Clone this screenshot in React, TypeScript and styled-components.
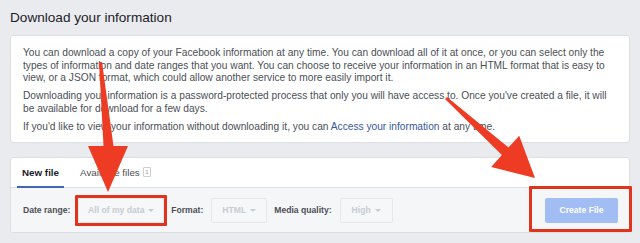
import React from "react";
import styled, { createGlobalStyle } from "styled-components";

const Global = createGlobalStyle`
  html, body {
    margin: 0;
    padding: 0;
    background: #e9ebee;
    font-family: "Liberation Sans", Arial, sans-serif;
  }
`;

export default function App() {
  return (
    <Page>
      <Global />
      <Title>Download your information</Title>

      <InfoCard>
        <p>
          You can download a copy of your Facebook information at any time. You
          can download all of it at once, or you can select only the types of
          information and date ranges that you want. You can choose to receive
          your information in an HTML format that is easy to view, or a JSON
          format, which could allow another service to more easily import it.
        </p>
        <p>
          Downloading your information is a password-protected process that
          only you will have access to. Once you've created a file, it will be
          available for download for a few days.
        </p>
        <p>
          If you'd like to view your information without downloading it, you
          can <a href="#">Access your information</a> at any time.
        </p>
      </InfoCard>

      <FileCard>
        <Tabs>
          <Tab $active>New file</Tab>
          <Tab>
            Available files <Count>1</Count>
          </Tab>
        </Tabs>
        <Footer>
          <Field>
            <Label>Date range:</Label>
            <Highlight $inset="-3px">
              <Select $width={86}>All of my data</Select>
            </Highlight>
          </Field>
          <Field>
            <Label>Format:</Label>
            <Select $width={56}>HTML</Select>
          </Field>
          <Field>
            <Label>Media quality:</Label>
            <Select $width={53}>High</Select>
          </Field>
          <Spacer />
          <Highlight $inset="-12px -14px -9px -16px">
            <CreateButton disabled>Create File</CreateButton>
          </Highlight>
        </Footer>
      </FileCard>

      <Arrows width="640" height="243" viewBox="0 0 640 243">
        <polygon
          fill="#ee3b24"
          points="99,62 102,62 113.5,146 128,146 108,192 88,146 103.5,146"
        />
        <polygon
          fill="#ee3b24"
          points="447,96.9 508.5,147.6 519.2,135.7 535,178 491.2,166.9 501.9,155 445,99.1"
        />
      </Arrows>
    </Page>
  );
}

const Page = styled.div`
  position: relative;
  width: 640px;
  height: 243px;
  padding: 0 10px;
  box-sizing: border-box;
  overflow: hidden;
`;

const Title = styled.h2`
  margin: 0;
  padding: 10px 0 0;
  height: 35px;
  box-sizing: border-box;
  font-size: 13.6px;
  font-weight: normal;
  color: #1d2129;
`;

const Card = styled.div`
  background: #fff;
  border: 1px solid #dddfe2;
  border-radius: 3px;
`;

const InfoCard = styled(Card)`
  padding: 11px 12px 9px;
  height: 108px;
  box-sizing: border-box;
  font-size: 10.2px;
  line-height: 12.6px;
  color: #4b4f56;

  > p {
    margin: 0 0 5.4px;
  }
  > p:last-child {
    margin: 0;
  }

  a {
    color: #365899;
    text-decoration: none;
  }
`;

const FileCard = styled(Card)`
  margin-top: 14px;
  overflow: visible;
`;

const Tabs = styled.div`
  display: flex;
  gap: 11px;
  height: 29px;
  padding: 0 6px;
  border-bottom: 1px solid #dddfe2;
`;

const Tab = styled.div<{ $active?: boolean }>`
  display: flex;
  align-items: center;
  gap: 3px;
  padding: 0 5px;
  font-size: 9.8px;
  font-weight: ${(p) => (p.$active ? "bold" : "normal")};
  color: ${(p) => (p.$active ? "#1d2129" : "#4b4f56")};
  border-bottom: 2px solid ${(p) => (p.$active ? "#4267b2" : "transparent")};
  margin-bottom: -1px;
`;

const Count = styled.span`
  display: inline-block;
  font-size: 6px;
  line-height: 8px;
  padding: 0 1.5px;
  border: 1px solid #ccd0d5;
  border-radius: 1px;
  color: #90949c;
`;

const Footer = styled.div`
  display: flex;
  align-items: center;
  height: 44px;
  padding: 0 11px 0 12px;
  background: #f5f6f7;
  border-radius: 0 0 3px 3px;
`;

const Field = styled.div`
  display: flex;
  align-items: center;
  gap: 8px;
  margin-right: 7px;
`;

const Label = styled.span`
  font-size: 8.6px;
  font-weight: bold;
  color: #4b4f56;
`;

const Select = styled.div<{ $width: number }>`
  width: ${(p) => p.$width}px;
  height: 25px;
  box-sizing: border-box;
  display: flex;
  align-items: center;
  justify-content: center;
  gap: 4px;
  background: #f6f7f9;
  border: 1px solid #e6e8eb;
  border-radius: 2px;
  font-size: 8.6px;
  font-weight: bold;
  color: #c8ccd2;

  &::after {
    content: "";
    border-left: 3px solid transparent;
    border-right: 3px solid transparent;
    border-top: 3px solid #c8ccd2;
  }
`;

const Spacer = styled.div`
  flex: 1;
`;

const Highlight = styled.div<{ $inset: string }>`
  position: relative;

  &::after {
    content: "";
    position: absolute;
    inset: ${(p) => p.$inset};
    border: 3px solid #e0341f;
    border-radius: 1px;
    pointer-events: none;
  }
`;

const CreateButton = styled.button`
  width: 73px;
  height: 25px;
  border: none;
  border-radius: 2px;
  background: #a2bdf3;
  color: #fff;
  font-family: inherit;
  font-size: 8.6px;
  font-weight: bold;
  padding: 0;
`;

const Arrows = styled.svg`
  position: absolute;
  left: 0;
  top: 0;
  pointer-events: none;
`;
